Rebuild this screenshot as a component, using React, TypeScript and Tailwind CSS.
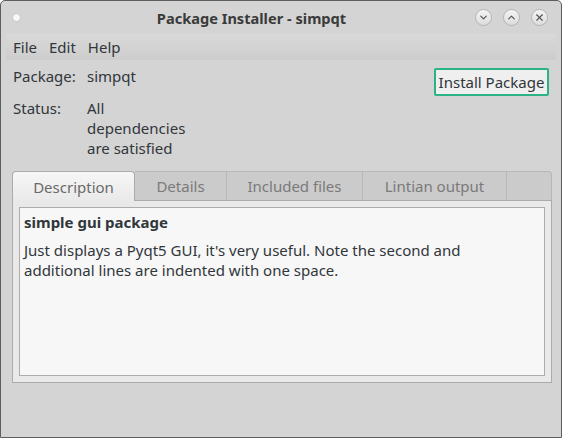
import { ChevronDown, ChevronUp, X } from "lucide-react";

function TitleButton({ children }: { children: React.ReactNode }) {
  return (
    <div className="flex h-[17px] w-[17px] items-center justify-center rounded-full border border-[#b4b4b4] bg-gradient-to-b from-[#f4f4f4] to-[#dcdcdc] text-[#555]">
      {children}
    </div>
  );
}

const tabs = [
  { name: "Description", w: "w-[123px]" },
  { name: "Details", w: "w-[92px]" },
  { name: "Included files", w: "w-[136px]" },
  { name: "Lintian output", w: "w-[144px]" },
];

function App() {
  return (
    <div className="flex h-[438px] w-[562px] flex-col rounded-t-[5px] border border-[#5e5e5e] bg-[#d4d4d4] font-['Noto_Sans',sans-serif] text-[15px] leading-[20px] text-[#31363b]">
      {/* title bar */}
      <div className="flex h-[33px] shrink-0 items-center pl-[12px] pr-[13px]">
        <div className="h-[7px] w-[7px] rounded-full bg-[#f8f8f8] shadow-[0_0_1px_#999]" />
        <div className="flex-1 pl-[8px] text-center text-[14.6px] font-bold text-[#3a3a3a]">
          Package Installer - simpqt
        </div>
        <div className="flex gap-[11px]">
          <TitleButton>
            <ChevronDown size={11} strokeWidth={2.5} />
          </TitleButton>
          <TitleButton>
            <ChevronUp size={11} strokeWidth={2.5} />
          </TitleButton>
          <TitleButton>
            <X size={11} strokeWidth={2.5} />
          </TitleButton>
        </div>
      </div>

      {/* menu bar */}
      <div className="mx-[5px] flex h-[26px] shrink-0 items-center gap-[12px] bg-gradient-to-b from-[#d9d9d9] to-[#cdcdcd] px-[7px]">
        <span>File</span>
        <span>Edit</span>
        <span>Help</span>
      </div>

      {/* info */}
      <div className="flex justify-between pl-[12px] pr-[12px] pt-[6px]">
        <div className="grid grid-cols-[74px_1fr] gap-y-[12px]">
          <span>Package:</span>
          <span>simpqt</span>
          <span>Status:</span>
          <span>
            All
            <br />
            dependencies
            <br />
            are satisfied
          </span>
        </div>
        <button className="mt-[2px] h-[28px] w-[115px] rounded-[2px] border-2 border-[#2bb386] bg-[#efefef] text-[15px] text-[#31363b]">
          Install Package
        </button>
      </div>

      {/* tab widget */}
      <div className="ml-[11px] mt-[13px] flex w-[540px] flex-col">
        <div className="flex h-[29px]">
          {tabs.map((t, i) =>
            i === 0 ? (
              <div
                key={t.name}
                className={`${t.w} relative z-10 -mb-px flex items-center justify-center rounded-t-[4px] border border-b-0 border-[#ababab] bg-gradient-to-b from-[#f7f7f7] to-[#e9e9e9] text-[#6a6a6a]`}
              >
                {t.name}
              </div>
            ) : (
              <div
                key={t.name}
                className={`${t.w} flex items-center justify-center border-t border-r border-[#b7b7b7] bg-[#cbcbcb] text-[#7a7a7a]`}
              >
                {t.name}
              </div>
            )
          )}
          <div className="flex-1 rounded-tr-[4px] border-t border-r border-[#b7b7b7] bg-[#cbcbcb]" />
        </div>
        <div className="h-[183px] border border-[#ababab] bg-[#e9e9e9] p-[6px]">
          <div className="h-full border border-[#acacac] bg-[#f7f7f7] px-[4px] pt-[4px]">
            <div className="font-bold">simple gui package</div>
            <p className="mt-[8px]">
              Just displays a Pyqt5 GUI, it's very useful. Note the second and
              <br />
              additional lines are indented with one space.
            </p>
          </div>
        </div>
      </div>
    </div>
  );
}

export default App;
